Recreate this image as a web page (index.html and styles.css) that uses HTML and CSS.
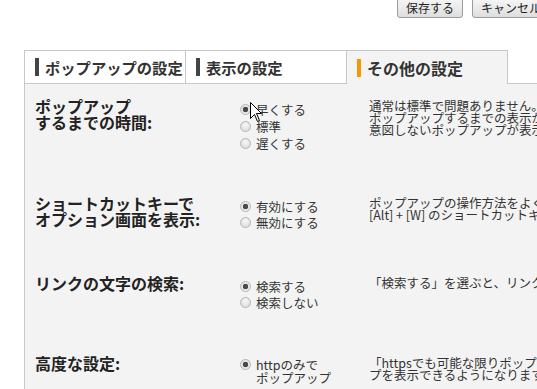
FILE: index.html
```html
<!DOCTYPE html>
<html lang="ja">
<head>
  <meta charset="UTF-8">
  <meta name="viewport" content="width=device-width, initial-scale=1.0">
  <title>オプション</title>
  <link rel="stylesheet" href="styles.css">
</head>
<body>
<div class="page">

  <div class="actions">
    <button class="btn">保存する</button>
    <button class="btn">キャンセル</button>
  </div>

  <div class="tabs">
    <div class="tab"><span class="mark"></span>ポップアップの設定</div>
    <div class="tab"><span class="mark"></span>表示の設定</div>
    <div class="tab active"><span class="mark"></span>その他の設定</div>
    <div class="tab-rest"></div>
  </div>

  <div class="panel">

    <div class="row first">
      <div class="label">ポップアップ<br>するまでの時間:</div>
      <div class="options tall">
        <label class="opt"><span class="radio checked"></span>早くする</label>
        <label class="opt"><span class="radio"></span>標準</label>
        <label class="opt"><span class="radio"></span>遅くする</label>
      </div>
      <div class="desc">
        通常は標準で問題ありません。<br>
        ポップアップするまでの表示が遅いと感じる場合は「早くする」を、<br>
        意図しないポップアップが表示される場合は「遅くする」を選んでください。
      </div>
    </div>

    <div class="row">
      <div class="label">ショートカットキーで<br>オプション画面を表示:</div>
      <div class="options">
        <label class="opt"><span class="radio checked"></span>有効にする</label>
        <label class="opt"><span class="radio"></span>無効にする</label>
      </div>
      <div class="desc">
        ポップアップの操作方法をよく変更する場合は、<br>
        [Alt] + [W] のショートカットキーでこの画面を開けます。
      </div>
    </div>

    <div class="row">
      <div class="label">リンクの文字の検索:</div>
      <div class="options">
        <label class="opt"><span class="radio checked"></span>検索する</label>
        <label class="opt"><span class="radio"></span>検索しない</label>
      </div>
      <div class="desc">
        「検索する」を選ぶと、リンクをクリックせずに検索できます。
      </div>
    </div>

    <div class="row">
      <div class="label">高度な設定:</div>
      <div class="options">
        <label class="opt multi"><span class="radio checked"></span><span>httpのみで<br>ポップアップ</span></label>
      </div>
      <div class="desc">
        「httpsでも可能な限りポップアップ」を選ぶと、httpsのページでもポップアッ<br>
        プを表示できるようになります。
      </div>
    </div>

  </div>

  <svg class="cursor" width="13" height="21" viewBox="0 0 13 21">
    <path d="M0.5 0.5 L0.5 16.5 L4.5 12.5 L7.5 19.5 L9.5 18.5 L6.5 11.5 L11.5 11.5 Z" fill="#fff" stroke="#000" stroke-width="1"/>
  </svg>

</div>
</body>
</html>
```

FILE: styles.css
```css
body {
  margin: 0;
  background: #ffffff;
  color: #333333;
  font-family: "Noto Sans CJK JP", "Noto Sans", sans-serif;
  overflow: hidden;
}

.page {
  position: relative;
  width: 580px;
  padding-left: 24px;
}

/* top buttons */
.actions {
  display: flex;
  gap: 9px;
  padding-left: 373px;
  margin-top: -2px;
}

.btn {
  height: 20px;
  padding: 0 8px;
  font-family: "Noto Sans CJK JP", sans-serif;
  font-size: 12px;
  line-height: 16px;
  color: #222222;
  background: linear-gradient(#f6f6f6, #dedede);
  border: 1px solid #9c9c9c;
  border-radius: 3px;
}

/* tabs */
.tabs {
  display: flex;
  margin-top: 32px;
}

.tab {
  display: flex;
  align-items: center;
  width: 150px;
  height: 32px;
  padding-left: 10px;
  border-top: 1px solid #c8c8c8;
  border-left: 1px solid #c8c8c8;
  border-bottom: 1px solid #c8c8c8;
  background: #ffffff;
  font-size: 15.3px;
  font-weight: bold;
  color: #333333;
  white-space: nowrap;
}

.tab .mark {
  display: inline-block;
  flex: none;
  width: 4px;
  height: 18px;
  margin-right: 6px;
  background: #444444;
}

.tab.active {
  height: 33px;
  align-self: flex-start;
  border-bottom: none;
  border-right: 1px solid #c8c8c8;
  background: #f3f3f3;
  font-size: 16px;
}

.tab.active .mark {
  background: #f39800;
}

.tab-rest {
  flex: 1;
  border-bottom: 1px solid #c8c8c8;
}

/* settings panel */
.panel {
  background: #f3f3f3;
  border-left: 1px solid #c8c8c8;
  padding-left: 10px;
  min-height: 320px;
}

.row {
  display: flex;
  align-items: flex-start;
  box-sizing: border-box;
  min-height: 80px;
  padding-top: 14px;
}

.row.first {
  min-height: 97px;
}

.label {
  width: 205px;
  flex: none;
  font-size: 16px;
  line-height: 16px;
  font-weight: bold;
  color: #222222;
}

.options {
  width: 129px;
  flex: none;
  margin-top: 3px;
}

.options.tall .opt {
  height: 17px;
}

.opt {
  display: flex;
  align-items: center;
  height: 16px;
  font-size: 12.5px;
  color: #333333;
  white-space: nowrap;
}

.opt.multi {
  align-items: flex-start;
  line-height: 13px;
  height: auto;
}

.opt.multi .radio {
  margin-top: 1px;
}

.radio {
  display: inline-block;
  width: 11px;
  height: 11px;
  margin-right: 5px;
  box-sizing: border-box;
  border: 1px solid #b4b4b4;
  border-radius: 50%;
  background: radial-gradient(circle at 50% 35%, #f8f8f8, #d6d6d6);
}

.radio.checked {
  background: radial-gradient(circle, #4a4a4a 0, #4a4a4a 2.5px, #e0e0e0 3px, #f2f2f2 5px);
}

.desc {
  flex: none;
  margin-top: 2px;
  font-size: 12.5px;
  line-height: 12px;
  color: #333333;
  white-space: nowrap;
}

/* mouse pointer over the first option */
.cursor {
  position: absolute;
  left: 250px;
  top: 104px;
}
```
